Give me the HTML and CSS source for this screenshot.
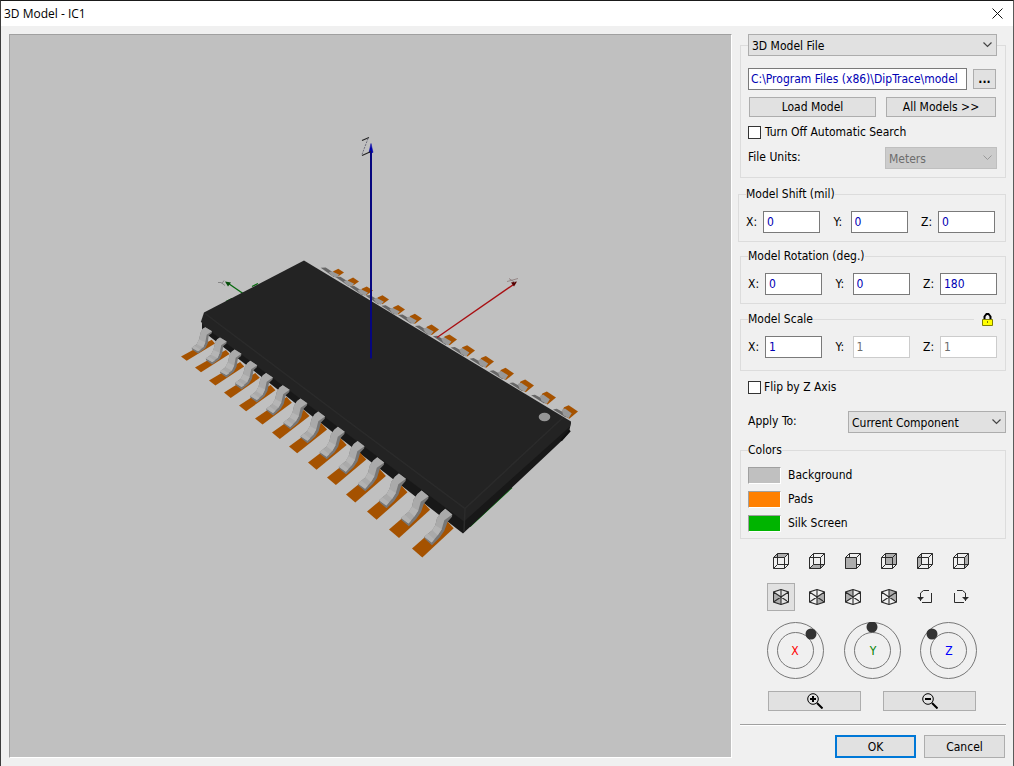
FILE: index.html
```html
<!DOCTYPE html>
<html lang="en">
<head>
   <meta charset="utf-8">
   <title>3D Model - IC1</title>
   <link rel="stylesheet" href="styles.css">
</head>
<body>
   <div class="window">
      <header class="titlebar">
         <h1>3D Model - IC1</h1>
         <button class="close" type="button" aria-label="Close">
            <svg width="11" height="11" viewBox="0 0 11 11"><path d="M.5 .5l10 10M10.5 .5l-10 10" stroke="#111" fill="none"/></svg>
         </button>
      </header>
      <main class="content">
         <div class="viewport">
            <svg viewBox="10 35 721 721" role="img" aria-label="3D view of IC1">
               <g stroke="#066a0d" stroke-width="1.3" fill="#064e0a">
                  <path d="M243 293L227 282"/>
                  <path d="M225 281l6 1-3 4z" stroke="none"/>
                  <path d="M218 282h3l4 3M222 283l2-3" stroke="#777" stroke-width=".8" fill="none"/>
                  <path d="M252 286l6-3M226 301l6-3M470 526L512 487"/>
               </g>
               <g id="back-pins"></g>
               <path d="M437 337L515 283" stroke="#a80f12" stroke-width="1.4"/>
               <path d="M517 281l-6 1 3 4z" fill="#500"/>
               <path d="M507 281l4-1 7-2M509 278l6 4" stroke="#8a7777" stroke-width=".8" fill="none"/>
               <path d="M202 320L202 330L463 533L562 440L569 432L571 422L563 417L463 508L205 313z" fill="#181818"/>
               <path d="M304 260L571 421L570 426L464 521L204 326L201 321L204 312z" fill="#232323"/>
               <path d="M205 313L347 420L465 508L563 417M465 508L464 531" fill="none" stroke="#2b2b2b" stroke-width="1.5"/>
               <path d="M570 430L561 440" stroke="#111" stroke-width="2"/>
               <ellipse cx="544.5" cy="416.5" rx="5.8" ry="4.2" fill="#959595"/>
               <g id="front-pins"></g>
               <path d="M371 358V150" stroke="#06067e" stroke-width="2"/>
               <path d="M371 143l2 9h-4z" fill="#0000a8" stroke="#0000a8" stroke-width=".5"/>
               <path d="M362 140l7-3M362 155l9-4" stroke="#222" stroke-width="1.1"/>
               <path d="M368 138l-6 16" stroke="#6e6e7c" stroke-width="1" stroke-dasharray="2 1"/>
            </svg>
         </div>
         <form class="panel" onsubmit="return false">
            <fieldset class="group group-file">
               <legend class="legend-select">
                  <select aria-label="Model source"><option>3D Model File</option></select>
               </legend>
               <div class="row path-row">
                  <input class="path" type="text" aria-label="Model path" value="C:\Program Files (x86)\DipTrace\models3d">
                  <button class="browse" type="button">...</button>
               </div>
               <div class="row load-row">
                  <button type="button">Load Model</button>
                  <button type="button">All Models &gt;&gt;</button>
               </div>
               <label class="check"><input type="checkbox">Turn Off Automatic Search</label>
               <div class="row units-row">
                  <label for="units">File Units:</label>
                  <select id="units" disabled><option>Meters</option></select>
               </div>
            </fieldset>
            <fieldset class="group group-shift">
               <legend>Model Shift (mil)</legend>
               <div class="row">
                  <label class="axis"><span>X:</span><input type="text" value="0"></label>
                  <label class="axis"><span>Y:</span><input type="text" value="0"></label>
                  <label class="axis"><span>Z:</span><input type="text" value="0"></label>
               </div>
            </fieldset>
            <fieldset class="group group-rotation">
               <legend>Model Rotation (deg.)</legend>
               <div class="row">
                  <label class="axis"><span>X:</span><input type="text" value="0"></label>
                  <label class="axis"><span>Y:</span><input type="text" value="0"></label>
                  <label class="axis"><span>Z:</span><input type="text" value="180"></label>
               </div>
            </fieldset>
            <fieldset class="group group-scale">
               <legend>Model Scale</legend>
               <button class="lock" type="button" aria-label="Lock proportions">
                  <svg width="11" height="13" viewBox="0 0 11 13"><path d="M2.5 6V3.5l2-2.5h2l2 2.5V6" fill="none" stroke="#000" stroke-width="2"/><path d="M.5 6.5h10v6h-10z" fill="#ff0" stroke="#808000"/><path d="M5 8h1v2H5z" fill="#808000"/></svg>
               </button>
               <div class="row">
                  <label class="axis"><span>X:</span><input type="text" value="1"></label>
                  <label class="axis"><span>Y:</span><input type="text" value="1" disabled></label>
                  <label class="axis"><span>Z:</span><input type="text" value="1" disabled></label>
               </div>
            </fieldset>
            <label class="check flip"><input type="checkbox">Flip by Z Axis</label>
            <div class="row apply-row">
               <label for="apply">Apply To:</label>
               <select id="apply"><option>Current Component</option></select>
            </div>
            <fieldset class="group group-colors">
               <legend>Colors</legend>
               <div class="color"><button class="swatch swatch-bg" id="c-bg" type="button"></button><label for="c-bg">Background</label></div>
               <div class="color"><button class="swatch swatch-pads" id="c-pads" type="button"></button><label for="c-pads">Pads</label></div>
               <div class="color"><button class="swatch swatch-silk" id="c-silk" type="button"></button><label for="c-silk">Silk Screen</label></div>
            </fieldset>
            <svg class="defs" width="0" height="0">
               <symbol id="box" viewBox="0 0 16 16"><path d="M.5 4.5h11v11H.5zM4.5 .5h11v11h-11zM.5 4.5l4-4M11.5 4.5l4-4M.5 15.5l4-4M11.5 15.5l4-4" fill="none" stroke="#2b2b2b"/></symbol>
               <symbol id="iso" viewBox="0 0 16 16"><path d="M8 .5l7.5 2.5v10l-7.5 2.500-7.5-2.500V3zM.5 3l15 10M15.500 3L.5 13" fill="none" stroke="#2b2b2b" stroke-width="1.1"/><path d="M8 1v14" stroke="#2b2b2b" stroke-width="1.1"/></symbol>
            </svg>
            <div class="views">
               <button type="button" aria-label="Top"><svg><path d="M.5 4.5l4-4h11l-4 4z"/><use href="#box"/></svg></button>
               <button type="button" aria-label="Bottom"><svg><path d="M.5 15.5l4-4h11l-4 4z"/><use href="#box"/></svg></button>
               <button type="button" aria-label="Front"><svg><use href="#box"/><path d="M1 5h10v10H1z"/></svg></button>
               <button type="button" aria-label="Back"><svg><path d="M4.5 .5h11v11h-11z"/><use href="#box"/></svg></button>
               <button type="button" aria-label="Left"><svg><path d="M.5 4.5l4-4v11l-4 4z"/><use href="#box"/></svg></button>
               <button type="button" aria-label="Right"><svg><path d="M11.5 4.5l4-4v11l-4 4z"/><use href="#box"/></svg></button>
               <button class="active" type="button" aria-label="South-west"><svg><path d="M.5 3L8 8v7.5L.5 13z"/><use href="#iso"/></svg></button>
               <button type="button" aria-label="South-east"><svg><path d="M15.5 3L8 8v7.5l7.5-2.5z"/><use href="#iso"/></svg></button>
               <button type="button" aria-label="North-west"><svg><path d="M8 .5V8L.5 13V3z"/><use href="#iso"/></svg></button>
               <button type="button" aria-label="North-east"><svg><path d="M8 .5V8l7.5 5V3z"/><use href="#iso"/></svg></button>
               <button type="button" aria-label="Rotate left"><svg><path class="line" d="M12 1.5H6.5l-3 2.500v5M14.5 4v9.5H5"/><path class="head" d="M0 8h7L4 11v1H3v-1z"/></svg></button>
               <button type="button" aria-label="Rotate right"><svg><path class="line" d="M4 1.5h5.500l3 2.500v5M1.5 4v9.5H11"/><path class="head" d="M16 8H9l3 3v1h1v-1z"/></svg></button>
            </div>
            <div class="dials">
               <svg viewBox="0 0 57 57"><circle cx="28.5" cy="28.5" r="28"/><circle cx="28.5" cy="28.5" r="18"/><circle class="knob" cx="44" cy="12" r="5.5"/><text class="x" x="28" y="33">X</text></svg>
               <svg viewBox="0 0 57 57"><circle cx="28.5" cy="28.5" r="28"/><circle cx="28.5" cy="28.5" r="18"/><circle class="knob" cx="28" cy="5" r="5.5"/><text class="y" x="29" y="33">Y</text></svg>
               <svg viewBox="0 0 57 57"><circle cx="28.5" cy="28.5" r="28"/><circle cx="28.5" cy="28.5" r="18"/><circle class="knob" cx="12" cy="12" r="5.5"/><text class="z" x="29" y="33">Z</text></svg>
            </div>
            <div class="zoom">
               <button type="button" aria-label="Zoom in"><svg width="16" height="16" viewBox="0 0 16 16"><circle cx="6" cy="6" r="5.3"/><path d="M3 6h6M6 3v6M10 10l5.5 5.5" stroke-width="2"/></svg></button>
               <button type="button" aria-label="Zoom out"><svg width="16" height="16" viewBox="0 0 16 16"><circle cx="6" cy="6" r="5.3"/><path d="M3 6h6M10 10l5.5 5.5" stroke-width="2"/></svg></button>
            </div>
            <div class="actions">
               <button class="default" type="submit">OK</button>
               <button type="button">Cancel</button>
            </div>
         </form>
      </main>
   </div>
   <script src="pins.js"></script>
</body>
</html>
```

FILE: styles.css
```css
* {
   box-sizing: border-box;
}
body {
   margin: 0;
   font-family: "DejaVu Sans Condensed", Tahoma, "Noto Sans", sans-serif;
   font-size: 12px;
   line-height: 16px;
   color: #000;
   background: #f0f0f0;
}
.window {
   display: flex;
   flex-direction: column;
   min-height: 100vh;
   border: 1px solid #5a5a5a;
   border-top-color: #1a1a1a;
   border-left-color: #3c3c3c;
}
.titlebar {
   display: flex;
   justify-content: space-between;
   align-items: center;
   height: 25px;
   padding: 0 10px 0 3px;
   background: #fff;
}
.titlebar h1 {
   margin: 0;
   font-family: "Open Sans", sans-serif;
   font-size: 12px;
   line-height: 16px;
   font-weight: normal;
}
.close {
   display: flex;
   padding: 0;
   border: 0;
   background: none;
}
.content {
   display: flex;
   flex: 1;
   gap: 8px;
   padding: 8px 7px 8px 8px;
}
.viewport {
   flex: 1;
   display: flex;
   min-width: 0;
   border: 1px solid #a0a0a0;
   border-right-color: #fff;
   border-bottom-color: #fff;
   background: #c0c0c0;
}
.viewport svg {
   width: 100%;
}

.panel {
   width: 266px;
   flex: none;
}
button,
input,
select {
   font: inherit;
   color: inherit;
}
.panel button {
   display: flex;
   align-items: center;
   justify-content: center;
   padding: 0;
   border: 1px solid #adadad;
   background: #e1e1e1;
}
.panel input[type="text"] {
   height: 22px;
   min-width: 0;
   padding: 0 3px;
   border: 1px solid #7a7a7a;
   border-radius: 0;
   background: #fff;
   color: #0000b4;
}
.panel input[type="text"]:disabled {
   border-color: #ccc;
   color: #6d6d6d;
}
select {
   appearance: none;
   height: 22px;
   padding: 1px 20px 0 3px;
   border: 1px solid #adadad;
   border-radius: 0;
   background: #e1e1e1 url("data:image/svg+xml,%3Csvg xmlns='http://www.w3.org/2000/svg' width='9' height='6'%3E%3Cpath d='M.5 .5l4 4 4-4' fill='none' stroke='%23444' stroke-width='1.2'/%3E%3C/svg%3E") no-repeat right 4px center;
}
select:disabled {
   border-color: #bfbfbf;
   background-color: #ccc;
   background-image: url("data:image/svg+xml,%3Csvg xmlns='http://www.w3.org/2000/svg' width='9' height='6'%3E%3Cpath d='M.5 .5l4 4 4-4' fill='none' stroke='%23999'/%3E%3C/svg%3E");
   color: #6d6d6d;
   opacity: 1;
}
.row {
   display: flex;
   justify-content: space-between;
}
.check {
   display: flex;
   align-items: center;
   gap: 4px;
}
.check input {
   appearance: none;
   width: 13px;
   height: 13px;
   margin: 0;
   border: 1px solid #333;
   background: #fff;
}

.group {
   position: relative;
   min-width: 0;
   margin: 0;
   padding: 9px 8px 8px 7px;
   border: 1px solid #dcdcdc;
}
.group legend {
   padding: 0;
}
.group .legend-select {
   width: 100%;
}
.legend-select select {
   display: block;
   width: 100%;
}
.group-file {
   padding-top: 12px;
}
.path-row {
   gap: 6px;
   padding-right: 1px;
}
.panel input.path {
   flex: 1;
   padding: 0 8px 0 2px;
}
.panel .browse {
   width: 23px;
   height: 20px;
   margin-top: 1px;
   font-weight: bold;
}
.load-row {
   gap: 10px;
   margin: 7px 0;
   padding: 0 1px;
}
.load-row button {
   height: 20px;
   width: 110px;
}
.load-row button:first-child {
   flex: 1;
}
.units-row {
   margin-top: 7px;
}
.units-row label,
.apply-row label {
   padding-top: 2px;
}
.units-row select {
   width: 112px;
}
.group-shift {
   margin: 8px 0 0 -2px;
   padding-right: 10px;
}
.group-rotation {
   margin-top: 6px;
}
.group-scale {
   margin-top: 7px;
   padding-bottom: 12px;
}
.axis {
   display: flex;
   align-items: center;
   width: 74px;
}
.axis span {
   width: 17px;
   flex: none;
}
.axis input {
   width: 57px;
}
.panel .lock {
   position: absolute;
   top: -16px;
   right: 4px;
   width: 27px;
   height: 16px;
   border: 0;
   background: #f0f0f0;
}
.flip {
   margin: 8px 0 16px 8px;
}
.flip.check {
   gap: 3px;
}
.apply-row {
   padding-left: 8px;
}
.apply-row select {
   width: 158px;
}
.group-colors {
   margin-top: 9px;
   padding-top: 5px;
   padding-bottom: 3px;
}
.color {
   display: flex;
   align-items: center;
   gap: 7px;
   height: 24px;
}
.panel .swatch {
   width: 33px;
   height: 17px;
   border-color: #a0a0a0 #fff #fff #a0a0a0;
}
.panel .swatch-bg {
   background: #c0c0c0;
}
.panel .swatch-pads {
   background: #ff8000;
}
.panel .swatch-silk {
   background: #00b400;
}

.defs {
   display: block;
}
.views {
   display: grid;
   grid-template-columns: repeat(6, 28px);
   gap: 8px;
   margin-top: 8px;
   padding-left: 27px;
}
.panel .views button {
   height: 28px;
   border-color: transparent;
   background: none;
}
.panel .views .active {
   border-color: #adadad;
   background: #e1e1e1;
}
.views svg {
   width: 16px;
   height: 16px;
   fill: #adadad;
}
.views .line {
   fill: none;
   stroke: #2b2b2b;
}
.views .head {
   fill: #2b2b2b;
}
.dials {
   display: flex;
   justify-content: space-between;
   margin-top: 11px;
   padding: 0 29px 0 27px;
}
.dials svg {
   width: 57px;
   height: 57px;
}
.dials circle {
   fill: none;
   stroke: #777;
}
.dials .knob {
   fill: #333;
   stroke: none;
}
.dials text {
   text-anchor: middle;
}
.dials .x {
   fill: #f00;
}
.dials .y {
   fill: #008000;
}
.dials .z {
   fill: #00f;
}
.zoom {
   display: flex;
   justify-content: space-between;
   margin-top: 12px;
   padding: 0 30px 0 28px;
}
.zoom button {
   width: 93px;
   height: 20px;
}
.zoom svg {
   fill: none;
   stroke: #000;
}
.actions {
   display: flex;
   justify-content: flex-end;
   gap: 8px;
   margin-top: 13px;
   padding: 10px 1px 0 0;
   border-top: 1px solid #a0a0a0;
   box-shadow: inset 0 1px #fff;
}
.actions button {
   width: 81px;
   height: 23px;
}
.panel .actions .default {
   border: 2px solid #0078d7;
}
```

FILE: pins.js
```js
// Both rows of the package are drawn from near and far outlines,
// blended pin by pin. Outlines are in thirds of a unit from the anchor.
const frontAnchors = [[181, 356], [195, 367], [209, 380], [224, 392], [239, 405], [255, 418], [272, 432],
   [289, 446], [308, 462], [327, 477], [346, 494], [367, 511], [389, 529], [412, 548]];
const backAnchors = [[344, 272], [359, 281], [373, 290], [389, 299], [405, 309], [422, 318], [439, 329],
   [457, 339], [475, 350], [494, 361], [514, 373], [534, 385], [556, 397], [578, 411]];

const front = [
   { fill: "#a55200",
     far: [[0, 0], [17, 13], [102, -39], [92, -50]],
     near: [[0, 0], [31, 27], [125, -61], [100, -88]] },
   { fill: "#777",
     far: [[59, -73], [65, -83], [73, -88], [93, -76], [92, -70], [83, -63], [80, -39], [73, -25], [51, -9], [33, -21], [32, -26], [47, -37], [54, -51]],
     near: [[75, -91], [87, -108], [100, -119], [121, -102], [120, -95], [107, -80], [97, -53], [83, -33], [60, -10], [38, -29], [37, -35], [61, -55], [70, -70]] },
   { fill: "#aaa",
     far: [[59, -73], [65, -83], [73, -88], [93, -76], [77, -65], [73, -43], [67, -28], [51, -16], [32, -26], [47, -37], [54, -51]],
     near: [[75, -91], [87, -108], [100, -119], [121, -102], [97, -85], [89, -58], [77, -40], [59, -18], [37, -35], [61, -55], [70, -70]] },
   { fill: "#b5b5b5",
     far: [[47, -37], [54, -51], [73, -43], [67, -28]],
     near: [[61, -55], [70, -70], [89, -58], [77, -40]] },
   { fill: "#b2b2b2",
     far: [[32, -26], [40, -32], [59, -20], [51, -16]],
     near: [[37, -35], [48, -45], [67, -28], [59, -18]] }
];
const back = [
   { fill: "#a55200",
     far: [[0, 0], [-17, -11], [-32, -4], [-36, 8], [-18, 12]],
     near: [[0, 0], [-28, -19], [-42, -13], [-50, 8], [-26, 22]] },
   { fill: "#666",
     far: [[-70, -14], [-55, -15], [-24, 5], [-30, 14]],
     near: [[-75, -6], [-64, -8], [-30, 10], [-36, 18]] },
   { fill: "#999",
     far: [[-46, 0], [-37, -4], [-14, 7], [-24, 16], [-38, 8]],
     near: [[-49, -5], [-39, -9], [-19, 5], [-28, 20], [-44, 11]] }
];

function drawRow(id, anchors, shapes) {
   let out = "";
   anchors.forEach(([x, y], i) => {
      const t = i / (anchors.length - 1);
      for (const s of shapes) {
         const points = s.far.map(([fx, fy], k) => {
            const [nx, ny] = s.near[k];
            return (x + (fx + (nx - fx) * t) / 3).toFixed(1) + "," + (y + (fy + (ny - fy) * t) / 3).toFixed(1);
         });
         out += `<polygon points="${points.join(" ")}" fill="${s.fill}"/>`;
      }
   });
   document.getElementById(id).innerHTML = out;
}

drawRow("front-pins", frontAnchors, front);
drawRow("back-pins", backAnchors, back);
```
